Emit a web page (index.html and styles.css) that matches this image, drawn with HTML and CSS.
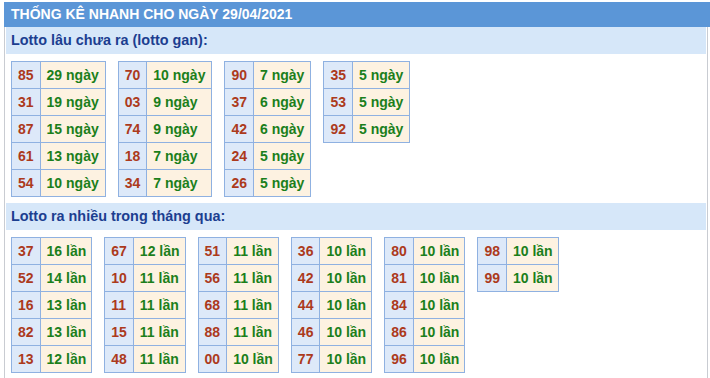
FILE: index.html
```html
<!DOCTYPE html>
<html lang="vi">
<head>
<meta charset="utf-8">
<title>Thống kê nhanh</title>
<link rel="stylesheet" href="styles.css">
</head>
<body>
<div class="page">
  <div class="title">THỐNG KÊ NHANH CHO NGÀY 29/04/2021</div>
  <div class="box">
    <div class="sub">Lotto lâu chưa ra (lotto gan):</div>
    <div class="groups">
      <table class="grp"><tbody>
        <tr><td class="num">85</td><td class="val">29 ngày</td></tr>
        <tr><td class="num">31</td><td class="val">19 ngày</td></tr>
        <tr><td class="num">87</td><td class="val">15 ngày</td></tr>
        <tr><td class="num">61</td><td class="val">13 ngày</td></tr>
        <tr><td class="num">54</td><td class="val">10 ngày</td></tr>
      </tbody></table>
      <table class="grp"><tbody>
        <tr><td class="num">70</td><td class="val">10 ngày</td></tr>
        <tr><td class="num">03</td><td class="val">9 ngày</td></tr>
        <tr><td class="num">74</td><td class="val">9 ngày</td></tr>
        <tr><td class="num">18</td><td class="val">7 ngày</td></tr>
        <tr><td class="num">34</td><td class="val">7 ngày</td></tr>
      </tbody></table>
      <table class="grp"><tbody>
        <tr><td class="num">90</td><td class="val">7 ngày</td></tr>
        <tr><td class="num">37</td><td class="val">6 ngày</td></tr>
        <tr><td class="num">42</td><td class="val">6 ngày</td></tr>
        <tr><td class="num">24</td><td class="val">5 ngày</td></tr>
        <tr><td class="num">26</td><td class="val">5 ngày</td></tr>
      </tbody></table>
      <table class="grp"><tbody>
        <tr><td class="num">35</td><td class="val">5 ngày</td></tr>
        <tr><td class="num">53</td><td class="val">5 ngày</td></tr>
        <tr><td class="num">92</td><td class="val">5 ngày</td></tr>
      </tbody></table>
    </div>
    <div class="sub">Lotto ra nhiều trong tháng qua:</div>
    <div class="groups groups-times">
      <table class="grp"><tbody>
        <tr><td class="num">37</td><td class="val">16 lần</td></tr>
        <tr><td class="num">52</td><td class="val">14 lần</td></tr>
        <tr><td class="num">16</td><td class="val">13 lần</td></tr>
        <tr><td class="num">82</td><td class="val">13 lần</td></tr>
        <tr><td class="num">13</td><td class="val">12 lần</td></tr>
      </tbody></table>
      <table class="grp"><tbody>
        <tr><td class="num">67</td><td class="val">12 lần</td></tr>
        <tr><td class="num">10</td><td class="val">11 lần</td></tr>
        <tr><td class="num">11</td><td class="val">11 lần</td></tr>
        <tr><td class="num">15</td><td class="val">11 lần</td></tr>
        <tr><td class="num">48</td><td class="val">11 lần</td></tr>
      </tbody></table>
      <table class="grp"><tbody>
        <tr><td class="num">51</td><td class="val">11 lần</td></tr>
        <tr><td class="num">56</td><td class="val">11 lần</td></tr>
        <tr><td class="num">68</td><td class="val">11 lần</td></tr>
        <tr><td class="num">88</td><td class="val">11 lần</td></tr>
        <tr><td class="num">00</td><td class="val">10 lần</td></tr>
      </tbody></table>
      <table class="grp"><tbody>
        <tr><td class="num">36</td><td class="val">10 lần</td></tr>
        <tr><td class="num">42</td><td class="val">10 lần</td></tr>
        <tr><td class="num">44</td><td class="val">10 lần</td></tr>
        <tr><td class="num">46</td><td class="val">10 lần</td></tr>
        <tr><td class="num">77</td><td class="val">10 lần</td></tr>
      </tbody></table>
      <table class="grp"><tbody>
        <tr><td class="num">80</td><td class="val">10 lần</td></tr>
        <tr><td class="num">81</td><td class="val">10 lần</td></tr>
        <tr><td class="num">84</td><td class="val">10 lần</td></tr>
        <tr><td class="num">86</td><td class="val">10 lần</td></tr>
        <tr><td class="num">96</td><td class="val">10 lần</td></tr>
      </tbody></table>
      <table class="grp"><tbody>
        <tr><td class="num">98</td><td class="val">10 lần</td></tr>
        <tr><td class="num">99</td><td class="val">10 lần</td></tr>
      </tbody></table>
    </div>
  </div>
</div>
</body>
</html>
```
FILE: styles.css
```css
html, body {
  margin: 0;
  padding: 0;
  background: #ffffff;
}
body {
  font-family: "Liberation Sans", Arial, sans-serif;
}
.page {
  margin: 2px 0 0 4px;
  width: 706px;
}
.title {
  height: 25px;
  line-height: 25px;
  background: #5b96d7;
  color: #ffffff;
  font-weight: bold;
  font-size: 14px;
  padding-left: 7px;
}
.box {
  width: 700px;
  height: 360px;
  border-left: 1px solid #c9ccd2;
  border-right: 1px solid #c9ccd2;
  padding: 0 1px;
}
.sub {
  height: 27px;
  line-height: 27px;
  background: #d6e7f9;
  color: #1c3e90;
  font-weight: bold;
  font-size: 14.4px;
  padding-left: 5px;
}
.groups {
  display: flex;
  align-items: flex-start;
  gap: 12px;
  padding: 7px 0 6px 5px;
}
.grp {
  border-collapse: collapse;
  border: 1px solid #8fb1e1;
}
.grp td {
  border: 1px solid #8fb1e1;
  height: 27px;
  padding: 0 6px;
  font-size: 14px;
  font-weight: bold;
  white-space: nowrap;
  box-sizing: border-box;
}
.grp td.num {
  background: #dde9f9;
  color: #ac3a1c;
}
.grp td.val {
  background: #fdf2e1;
  color: #1b7f1b;
}
.groups-times .grp td.val {
  padding: 0 5px 0 6px;
}
```
